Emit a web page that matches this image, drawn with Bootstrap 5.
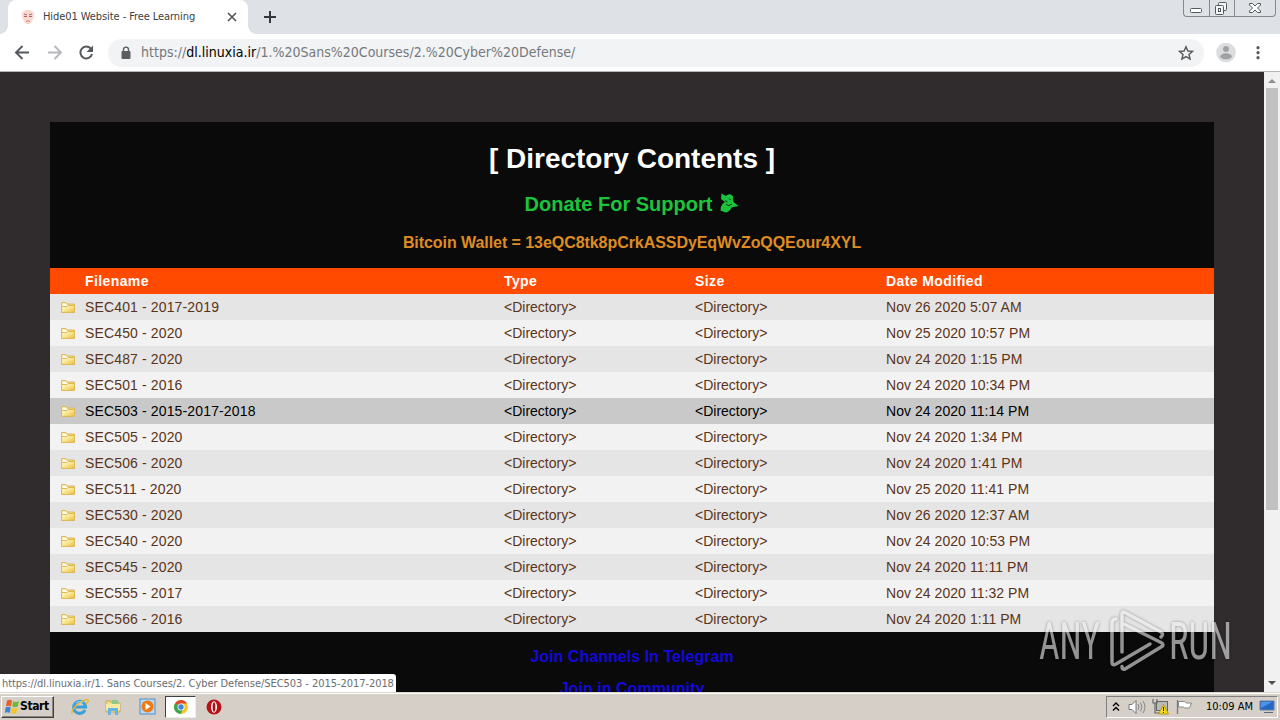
<!DOCTYPE html>
<html lang="en">
<head>
  <meta charset="UTF-8" />
  <title>Hide01 Website - Free Learning</title>
  <meta name="viewport" content="width=device-width, initial-scale=1" />

  <!-- Bootstrap 5 -->
  <link href="https://cdn.jsdelivr.net/npm/bootstrap@5.3.0/dist/css/bootstrap.min.css" rel="stylesheet" />

  <style>
    body {
      width: 1280px;
      height: 720px;
      font-family: "DejaVu Sans Condensed", "DejaVu Sans", sans-serif;
      font-stretch: condensed;
      font-size: 11px;
      line-height: 1.2;
      color: #000;
    }

    svg {
      display: block;
      flex: none;
    }

    /* browser frame */
    .tab-strip {
      height: 34px;
      background: #dee1e6;
    }

    .page-tab {
      width: 240px;
      margin-left: 8px;
      padding: 0 10px 0 13px;
      background: #fff;
      border-radius: 8px 8px 0 0;
      color: #3c4043;
      position: relative;
    }

    .page-tab::before, .page-tab::after {
      content: "";
      position: absolute;
      bottom: 0;
      width: 8px;
      height: 8px;
    }

    .page-tab::before {
      left: -8px;
      background: radial-gradient(circle at 0 0, transparent 7.5px, #fff 8px);
    }

    .page-tab::after {
      right: -8px;
      background: radial-gradient(circle at 100% 0, transparent 7.5px, #fff 8px);
    }

    .tab-title {
      width: 162px;
      margin-left: 8px;
      letter-spacing: -.08px;
    }

    .win-buttons {
      width: 93px;
      height: 17px;
      margin-right: 4px;
      border: 1px solid #85888d;
      border-top: 0;
      border-radius: 0 0 4px 4px;
    }

    .win-buttons > span + span {
      border-left: 1px solid #85888d;
    }

    .toolbar {
      height: 38px;
      border-bottom: 1px solid #b4b5b6;
      padding: 0 14px 0 14px;
    }

    .address {
      width: 1096px;
      height: 28px;
      margin-left: 14px;
      padding: 0 10px 0 12px;
      border-radius: 14px;
      background: #f1f3f4;
      color: #75797e;
      font-size: 14px;
      letter-spacing: .01px;
    }

    .url-text {
      margin-left: 9px;
    }

    /* page */
    .viewport {
      height: 620px;
      background: #302c2d;
      position: relative;
    }

    .page-body {
      padding: 50px 50px 0;
      overflow: hidden;
      font-family: "Liberation Sans", sans-serif;
    }

    .listing {
      height: 700px;
      background: #0a0a0a;
      text-align: center;
    }

    .listing h1 {
      font-size: 28px;
      line-height: 34px;
      font-weight: bold;
      color: #fff;
      margin: 0;
      padding-top: 20px;
    }

    .listing h2 {
      font-size: 20px;
      line-height: 24px;
      font-weight: bold;
      color: #1cc43c;
      margin: 16px 0 0;
    }

    .listing h3 {
      font-size: 16px;
      line-height: 20px;
      font-weight: bold;
      color: #df8c20;
      margin: 17px 0 15px;
      letter-spacing: -.06px;
    }

    .listing a {
      display: block;
      font-size: 16px;
      line-height: 20px;
      font-weight: bold;
      color: #1408dc;
      text-decoration: none;
      margin-top: 12px;
      letter-spacing: .04px;
    }

    .files {
      width: 100%;
      table-layout: fixed;
      text-align: left;
      font-size: 14px;
      line-height: 16px;
      color: #5a3418;
    }

    .files th, .files td {
      height: 26px;
      padding: 0 10px;
      white-space: nowrap;
    }

    .files th {
      background: #ff4a00;
      color: #fff;
      letter-spacing: .4px;
    }

    .files tbody tr { background: #f2f2f2; }
    .files tbody tr:nth-child(odd) { background: #e5e5e5; }
    .files tbody tr.hovered { background: #c9c9c9; color: #000; }
    .files td:first-child { letter-spacing: .14px; }
    .files td:last-child { letter-spacing: .05px; }

    .scroll-rail {
      width: 16px;
      background: #f1f1f1;
    }

    .scroll-thumb {
      width: 12px;
      height: 422px;
      background: #c1c1c1;
    }

    .status-bubble {
      position: absolute;
      left: 0;
      bottom: 0;
      width: 396px;
      height: 18px;
      padding: 3px 0 0 2px;
      background: #fff;
      border-radius: 0 3px 0 0;
      color: #6a6d70;
      letter-spacing: -.055px;
      white-space: nowrap;
    }

    .watermark {
      position: absolute;
      left: 1034px;
      top: 532px;
      opacity: .6;
      filter: drop-shadow(0 0 1.5px rgba(0, 0, 0, .6));
    }

    /* taskbar */
    .taskbar {
      height: 28px;
      background: #d5cfc7;
      border-top: 1px solid #d8d4ce;
      box-shadow: inset 0 1px #fff;
      padding: 2px 2px 2px 1px;
    }

    .start-btn {
      width: 53px;
      height: 22px;
      padding-left: 2px;
      border: 1px solid;
      border-color: #fff #404040 #404040 #fff;
      box-shadow: inset -1px -1px #88847e;
      font-weight: bold;
      font-size: 12px;
      letter-spacing: -.4px;
    }

    .task-active {
      width: 31px;
      height: 22px;
      background: #fff;
      border: 1px solid;
      border-color: #404040 #eee #eee #404040;
    }

    .tray {
      width: 172px;
      height: 22px;
      border: 1px solid;
      border-color: #808080 #fff #fff #808080;
      padding: 0 2px 0 5px;
    }
  </style>
</head>
<body class="d-flex flex-column overflow-hidden m-0">

<!-- shared folder icon -->
<svg width="0" height="0" class="position-absolute">
  <defs>
    <linearGradient id="fold" x1="0" y1="0" x2="1" y2="1">
      <stop offset="0" stop-color="#fffbe0" />
      <stop offset=".5" stop-color="#f8e48c" />
      <stop offset="1" stop-color="#e6b93e" />
    </linearGradient>
    <symbol id="folder" viewBox="0 0 16 14">
      <path d="M1.500 11.500V2.500h4.500l1 1.500h7.500v7.500z" fill="#f3d978" stroke="#dcbb66" />
      <path d="M2.500 3.500H6l1 1.500h6.500v1h-11z" fill="#fffdf0" />
      <path d="M1.500 6.500h5.500l1-1h6.500v7h-13z" fill="url(#fold)" stroke="#dfb954" />
    </symbol>
  </defs>
</svg>

<!-- TABS -->
<div class="tab-strip d-flex flex-shrink-0 justify-content-between">
  <div class="d-flex">
    <div class="page-tab d-flex align-items-center">
      <svg width="14" height="16" viewBox="0 0 14 16">
        <path d="M1 6q0-5 6-5t6 5q0 3-2 6l-2 3H5l-2-3Q1 9 1 6z" fill="#f8d8cf" />
        <path d="M3 5l3 1M11 5L8 6" stroke="#b06a66" />
        <path d="M3 7.500h3M8 7.500h3" stroke="#b95f5c" stroke-width="1.200" />
        <path d="M5 12.500q2-1.500 4 0" stroke="#e0807a" fill="none" />
      </svg>
      <span class="tab-title text-nowrap">Hide01 Website - Free Learning</span>
      <svg class="ms-auto" width="12" height="12" viewBox="0 0 12 12" stroke="#54575b" stroke-width="1.700"><path d="M2 2l8 8M10 2l-8 8" /></svg>
    </div>
    <svg class="ms-3 mt-2" width="12" height="18" viewBox="0 0 12 18" stroke="#35383c" stroke-width="2"><path d="M0 9h12M6 3v12" /></svg>
  </div>
  <div class="win-buttons d-flex">
    <span style="width:25px"><svg width="25" height="16" fill="#fff" stroke="#54575c"><rect x="6.500" y="8.500" width="11" height="4" rx="1" /></svg></span>
    <span style="width:25px"><svg width="24" height="16" fill="#f4f5f6" stroke="#54575c"><rect x="8.500" y="2.500" width="8" height="8" rx="1" /><rect x="5.500" y="5.500" width="8" height="9" rx="1" /><rect x="8.500" y="8.500" width="2" height="3" /></svg></span>
    <span style="width:41px"><svg width="40" height="16"><path d="M14.500 3.500h3l2.500 2.500 2.500-2.500h3v1.500l-3 3 3 3v1.500h-3L20 10l-2.500 2.500h-3V11l3-3-3-3z" fill="#fff" stroke="#54575c" /></svg></span>
  </div>
</div>

<!-- TOOLBAR -->
<div class="toolbar bg-white d-flex align-items-center flex-shrink-0">
  <svg width="80" height="20" viewBox="0 0 80 20" fill="none" stroke="#55585c" stroke-width="1.900">
    <path d="M15 9.500H2M8.500 3L2 9.500l6.500 6.500" />
    <path d="M34 9.500h13M40.500 3L47 9.500l-6.500 6.500" stroke="#b5b7ba" />
    <path d="M76.800 5.700A5.900 5.900 0 1 0 78 11" stroke-width="2" />
    <path d="M79 2.500v6.500h-6.500z" fill="#55585c" stroke="none" />
  </svg>
  <div class="address d-flex align-items-center">
    <svg width="12" height="14" viewBox="0 0 12 14"><rect x="1.500" y="5" width="9" height="8" rx="1" fill="#5a5d61" /><path d="M3.500 6V3.600a2.500 2.500 0 0 1 5 0V6" fill="none" stroke="#5a5d61" stroke-width="1.400" /></svg>
    <span class="url-text text-nowrap">https://<span class="text-black">dl.linuxia.ir</span>/1.%20Sans%20Courses/2.%20Cyber%20Defense/</span>
    <svg class="ms-auto" width="16" height="16" viewBox="0 0 16 16" fill="none" stroke="#55585c" stroke-width="1.400"><path d="M8 1.700l1.900 4.300 4.700.4L11 9.500l1.100 4.600L8 11.600l-4.100 2.500L5 9.500 1.400 6.400 6.100 6z" /></svg>
  </div>
  <svg class="ms-auto" width="20" height="20" viewBox="0 0 20 20"><circle cx="10" cy="9.500" r="9.800" fill="#dcdddf" /><circle cx="10" cy="6" r="3" fill="#a0a2a5" /><ellipse cx="10" cy="13.300" rx="5.800" ry="3" fill="#a0a2a5" /></svg>
  <svg width="12" height="16" viewBox="0 0 12 16" fill="#55585c" style="margin:0 2px 0 16px"><circle cx="6" cy="2.700" r="1.600" /><circle cx="6" cy="7.700" r="1.600" /><circle cx="6" cy="12.700" r="1.600" /></svg>
</div>

<!-- PAGE -->
<div class="viewport d-flex flex-shrink-0 overflow-hidden">
  <div class="page-body flex-grow-1">
    <div class="listing">
      <h1>[ Directory Contents ]</h1>
      <h2 class="d-flex justify-content-center">Donate For Support
        <svg style="margin-left:7px" width="20" height="22" viewBox="0 0 20 22">
          <path d="M2.500 1.500L7 4q2-2.500 5-1.500l2 2q-.5 3 .5 5.500l5 4-7 1.500q-2 4.500-6 5l-5-2q0-4 2-6.500L6 10 2 7z" fill="#1cc43c" />
          <path d="M6 8.500l2.500 1.500M10 6.500l1.500 1.500M7 12.500q3 2.500 6-.5" stroke="#0b3514" fill="none" />
        </svg>
      </h2>
      <h3>Bitcoin Wallet = 13eQC8tk8pCrkASSDyEqWvZoQQEour4XYL</h3>
      <table class="files">
        <colgroup><col style="width:444px" /><col style="width:191px" /><col style="width:191px" /><col /></colgroup>
        <thead>
          <tr><th style="padding-left:35px">Filename</th><th>Type</th><th>Size</th><th>Date Modified</th></tr>
        </thead>
        <tbody id="fileRows"></tbody>
      </table>
      <a href="#" style="margin-top:15px">Join Channels In Telegram</a>
      <a href="#">Join in Community</a>
    </div>
  </div>

  <div class="scroll-rail d-flex flex-column align-items-center">
    <svg width="16" height="16"><path d="M4 11h8L8 7z" fill="#8c8c8c" /></svg>
    <div class="scroll-thumb"></div>
    <svg class="mt-auto" width="16" height="16"><path d="M4 5h8L8 9z" fill="#505050" /></svg>
  </div>

  <div class="status-bubble">https://dl.linuxia.ir/1. Sans Courses/2. Cyber Defense/SEC503 - 2015-2017-2018</div>

  <svg class="watermark" width="206" height="72" viewBox="0 0 206 72" fill="#eee">
    <g font-family="Roboto, sans-serif" font-size="51">
      <text x="5" y="55" textLength="61" lengthAdjust="spacingAndGlyphs">ANY</text>
      <text x="135" y="55" textLength="63" lengthAdjust="spacingAndGlyphs">RUN</text>
    </g>
    <g fill="none" stroke="#eee" stroke-width="3.500" stroke-linejoin="round" stroke-linecap="round">
      <path d="M82 15q-4 0-4 4v39q0 4 4 2l34-20" />
      <path d="M88 48V10q0-3 3-1.500L127 28q3 2 0 5" />
      <path d="M90 20l37 18.500q4 2.500 0 4.500L91 65q-3 1-3-2.500" />
    </g>
  </svg>
</div>

<!-- TASKBAR -->
<div class="taskbar d-flex align-items-center justify-content-between flex-shrink-0">
  <div class="d-flex align-items-center">
    <div class="start-btn d-flex align-items-center">
      <svg width="16" height="16" viewBox="0 0 16 16">
        <path d="M3 1.500q3-1.500 5 .3L7 7.500q-2.500-1.500-5-.3z" fill="#e5602a" />
        <path d="M9 2.200q2.500 1.500 6 0L13.800 7.500q-3 1.300-5.500 0z" fill="#72b83b" />
        <path d="M1.700 8.400q2.500-1.300 5 .2l-1 5.500q-2.500-1.500-5-.2z" fill="#3f82d2" />
        <path d="M7.800 8.800q2.700 1.200 5.700 0l-1.200 5.500q-3 1.200-5.500-.2z" fill="#f5c52e" />
      </svg>
      <span>Start</span>
    </div>
    <svg style="margin-left:16px" width="19" height="18" viewBox="0 0 19 18" fill="none">
      <path d="M15 12a6 6 0 1 1 .6-3H5" stroke="#3d9fd8" stroke-width="3" />
      <path d="M2.500 16Q0 13 7 7t11-5q1 1-2 4" stroke="#e5b93a" stroke-width="1.500" />
      <path d="M13 5a5 5 0 0 0-7 0" stroke="#9bdcf8" />
    </svg>
    <svg style="margin-left:16px" width="16" height="18" viewBox="0 0 16 18">
      <path d="M1 14V3h5l1 2h8v9z" fill="#f2dc84" stroke="#c9a94e" /><path d="M7 2h6v5H7z" fill="#8fc98a" />
      <path d="M1 6h14v6H1z" fill="#fae9a2" /><path d="M3 17v-7h10v7h-3v-4H6v4z" fill="#62b5e4" />
    </svg>
    <svg style="margin-left:18px" width="17" height="17" viewBox="0 0 17 17">
      <rect x="1" y="1" width="15" height="15" fill="#b9d8f4" stroke="#4f90c7" />
      <circle cx="8.500" cy="8.500" r="6" fill="#ee7a13" /><path d="M6.500 5v7l5-3.500z" fill="#fff" />
    </svg>
    <div class="task-active d-flex justify-content-center align-items-center" style="margin-left:9px">
      <svg width="16" height="16" viewBox="0 0 16 16">
        <circle cx="8" cy="8" r="7" fill="#f6c928" /><path d="M8 8L2 4.400A7 7 0 0 1 14 4.500H8z" fill="#df4534" />
        <path d="M2 4.400A7 7 0 0 0 7.500 15L10.500 10 8 8z" fill="#37a353" />
        <circle cx="8" cy="8" r="3.500" fill="#fff" /><circle cx="8" cy="8" r="2.700" fill="#4683e6" />
      </svg>
    </div>
    <svg style="margin-left:10px" width="16" height="16" viewBox="0 0 16 16"><circle cx="8" cy="8" r="7.500" fill="#b51219" /><ellipse cx="8" cy="8" rx="3" ry="5.800" fill="#fff" /><ellipse cx="8" cy="8" rx="1.400" ry="4.700" fill="#a90f16" /></svg>
  </div>
  <div class="tray d-flex align-items-center">
    <svg width="8" height="12" fill="none" stroke="#000" stroke-width="1.400"><path d="M1 5l3-3 3 3M1 9.500l3-3 3 3" /></svg>
    <svg style="margin-left:8px" width="18" height="16" viewBox="0 0 18 16"><path d="M1 5.500h3l4-4v13l-4-4H1z" fill="#fff" stroke="#777" /><path d="M10 5q2 3 0 6M12.500 3.500q3 4.500 0 9M15 2q4 6 0 12" fill="none" stroke="#888" /></svg>
    <svg style="margin-left:6px" width="17" height="17" viewBox="0 0 17 17"><rect x="4.500" y="3.500" width="11" height="9" fill="#b9bcb9" stroke="#666" /><path d="M1 1v4h4V1M3 5v10h5" fill="none" stroke="#666" stroke-width="1.200" /><path d="M11.500 6.500l5 9.500h-10z" fill="#f8dc20" stroke="#b49715" /><path d="M11.500 9v4M11.500 14v1" stroke="#222" /></svg>
    <svg style="margin-left:7px" width="17" height="16" viewBox="0 0 17 16"><path d="M1.500 1v14" stroke="#777" stroke-width="1.300" /><path d="M2.500 2.500h6l2 1.500h5l-2 5h-5l-1-1h-5z" fill="#fff" stroke="#888" /></svg>
    <span class="clock text-nowrap" style="margin-left:13px">10:09 AM</span>
    <svg class="ms-auto" width="16" height="14" viewBox="0 0 16 14"><path d="M1 1h14v9H1z" fill="#2866c4" stroke="#5c7fa8" /><path d="M2 2h11L2 8z" fill="#4d94e8" /><path d="M5 12h9v1H5z" fill="#5f6b78" /></svg>
  </div>
</div>

<script src="https://cdn.jsdelivr.net/npm/bootstrap@5.3.0/dist/js/bootstrap.bundle.min.js"></script>
<script>
  const files = [
    ["SEC401 - 2017-2019", "Nov 26 2020 5:07 AM"],
    ["SEC450 - 2020", "Nov 25 2020 10:57 PM"],
    ["SEC487 - 2020", "Nov 24 2020 1:15 PM"],
    ["SEC501 - 2016", "Nov 24 2020 10:34 PM"],
    ["SEC503 - 2015-2017-2018", "Nov 24 2020 11:14 PM"],
    ["SEC505 - 2020", "Nov 24 2020 1:34 PM"],
    ["SEC506 - 2020", "Nov 24 2020 1:41 PM"],
    ["SEC511 - 2020", "Nov 25 2020 11:41 PM"],
    ["SEC530 - 2020", "Nov 26 2020 12:37 AM"],
    ["SEC540 - 2020", "Nov 24 2020 10:53 PM"],
    ["SEC545 - 2020", "Nov 24 2020 11:11 PM"],
    ["SEC555 - 2017", "Nov 24 2020 11:32 PM"],
    ["SEC566 - 2016", "Nov 24 2020 1:11 PM"]
  ];

  document.getElementById("fileRows").innerHTML = files.map(([name, date]) => `
    <tr class="${name.startsWith("SEC503") ? "hovered" : ""}">
      <td><div class="d-flex align-items-center"><svg width="16" height="14" style="margin-right:9px"><use href="#folder" /></svg>${name}</div></td>
      <td>&lt;Directory&gt;</td>
      <td>&lt;Directory&gt;</td>
      <td>${date}</td>
    </tr>
  `).join("");
</script>

</body>
</html>
